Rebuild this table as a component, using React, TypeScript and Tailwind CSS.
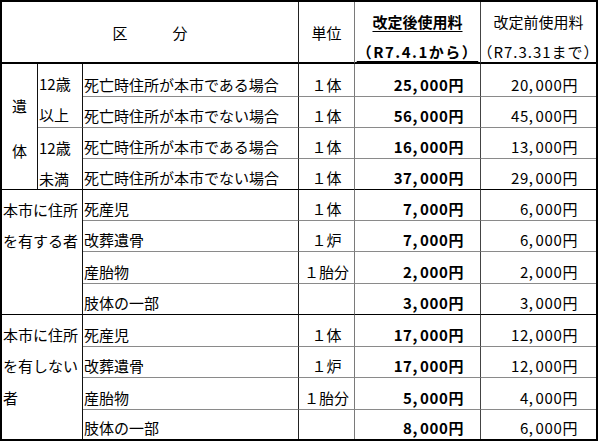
const rows = [
  { desc: '死亡時住所が本市である場合', unit: '１体', after: '25,000円', before: '20,000円' },
  { desc: '死亡時住所が本市でない場合', unit: '１体', after: '56,000円', before: '45,000円' },
  { desc: '死亡時住所が本市である場合', unit: '１体', after: '16,000円', before: '13,000円' },
  { desc: '死亡時住所が本市でない場合', unit: '１体', after: '37,000円', before: '29,000円' },
  { desc: '死産児', unit: '１体', after: '7,000円', before: '6,000円' },
  { desc: '改葬遺骨', unit: '１炉', after: '7,000円', before: '6,000円' },
  { desc: '産胎物', unit: '１胎分', after: '2,000円', before: '2,000円' },
  { desc: '肢体の一部', unit: '', after: '3,000円', before: '3,000円' },
  { desc: '死産児', unit: '１体', after: '17,000円', before: '12,000円' },
  { desc: '改葬遺骨', unit: '１炉', after: '17,000円', before: '12,000円' },
  { desc: '産胎物', unit: '１胎分', after: '5,000円', before: '4,000円' },
  { desc: '肢体の一部', unit: '', after: '8,000円', before: '6,000円' },
];

function bottomFor(i: number) {
  if (i === 11) return '';
  if (i === 3 || i === 7) return 'border-b border-b-black';
  return 'border-b border-b-[#8a8a8a]';
}

// "25,000円" -> comma gets a little room, like the half-width comma in the original
function Yen({ v }: { v: string }) {
  const [head, tail] = v.split(',');
  return (
    <span className="tracking-[0.6px]">
      {head}
      <span className="mr-[2px]">,</span>
      {tail}
    </span>
  );
}

function RowCells({ r, i }: { r: (typeof rows)[number]; i: number }) {
  const b = bottomFor(i);
  return (
    <>
      <div className={`${b} border-r border-r-[#222] flex items-end pl-[1px] pb-[4px] leading-[15px] whitespace-nowrap`}>
        {r.desc}
      </div>
      <div className={`${b} border-r border-r-[#7a7a7a] flex items-end justify-center pb-[4px] leading-[15px]`}>
        {r.unit}
      </div>
      <div className={`${b} border-r border-r-[#444] flex items-end justify-end pr-[16px] pb-[4px] leading-[15px] font-bold`}>
        <Yen v={r.after} />
      </div>
      <div className={`${b} flex items-end justify-end pr-[18px] pb-[4px] leading-[15px]`}>
        <Yen v={r.before} />
      </div>
    </>
  );
}

export default function App() {
  return (
    <div className="w-[600px] h-[442px] bg-white">
      <div className="w-[598px] h-[441px] border-2 border-black grid grid-cols-[36px_45px_216px_56px_126px_115px] grid-rows-[62px_33px_31px_31px_31px_31px_31px_32px_31px_32px_31px_32px_1fr] text-[15px] text-black font-['Noto_Sans_CJK_JP',sans-serif]">
        {/* header */}
        <div className="col-span-3 border-r border-r-[#222] border-b-2 border-b-black flex items-center justify-center leading-[15px]">
          区　　　分
        </div>
        <div className="border-r border-r-[#7a7a7a] border-b-2 border-b-black flex items-center justify-center leading-[15px]">
          単位
        </div>
        <div className="border-r border-r-[#444] border-b-2 border-b-black flex flex-col items-center pt-[5px] leading-[30px] font-bold whitespace-nowrap">
          <span className="underline underline-offset-[3px]">改定後使用料</span>
          <span className="underline underline-offset-[3px] tracking-[1.5px]">（R7.4.1から）</span>
        </div>
        <div className="border-b-2 border-b-black flex flex-col items-center pt-[5px] leading-[30px] whitespace-nowrap">
          <span>改定前使用料</span>
          <span className="tracking-[1px]">（R7.3.31まで）</span>
        </div>

        {/* 遺体 */}
        <div className="row-span-4 border-r border-r-[#111] border-b border-b-black flex flex-col items-center justify-center gap-[30px] pt-[2px] leading-[15px]">
          <span>遺</span>
          <span>体</span>
        </div>
        <div className="row-span-2 border-r border-r-[#111] border-b border-b-[#8a8a8a] flex flex-col pl-[1px] pt-[4px] leading-[31.3px]">
          <span>12歳</span>
          <span>以上</span>
        </div>
        <RowCells r={rows[0]} i={0} />
        <RowCells r={rows[1]} i={1} />
        <div className="row-span-2 border-r border-r-[#111] border-b border-b-black flex flex-col pl-[1px] pt-[4px] leading-[31.3px]">
          <span>12歳</span>
          <span>未満</span>
        </div>
        <RowCells r={rows[2]} i={2} />
        <RowCells r={rows[3]} i={3} />

        {/* 本市に住所を有する者 */}
        <div className="col-span-2 row-span-4 border-r border-r-[#111] border-b border-b-black flex flex-col pl-[1px] pt-[4px] leading-[31.3px] whitespace-nowrap">
          <span>本市に住所</span>
          <span>を有する者</span>
        </div>
        {rows.slice(4, 8).map((r, k) => (
          <RowCells key={k} r={r} i={k + 4} />
        ))}

        {/* 本市に住所を有しない者 */}
        <div className="col-span-2 row-span-4 border-r border-r-[#111] flex flex-col pl-[1px] pt-[4px] leading-[31.3px] whitespace-nowrap">
          <span>本市に住所</span>
          <span>を有しない</span>
          <span>者</span>
        </div>
        {rows.slice(8, 12).map((r, k) => (
          <RowCells key={k} r={r} i={k + 8} />
        ))}
      </div>
    </div>
  );
}
